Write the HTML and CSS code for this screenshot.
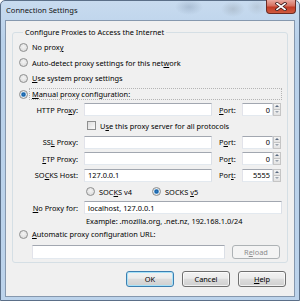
FILE: index.html
```html
<!DOCTYPE html>
<html>
<head>
<meta charset="utf-8">
<link rel="stylesheet" href="styles.css">
</head>
<body>
<div class="window">
  <div class="titlebar">
    <span class="title">Connection Settings</span>
    <div class="close">
      <svg width="12" height="9" viewBox="0 0 12 9"><path d="M2 1.5 L10 7.5 M10 1.5 L2 7.5" stroke="#3b1a1a" stroke-width="3.2" stroke-linecap="square"/><path d="M2 1.5 L10 7.5 M10 1.5 L2 7.5" stroke="#fff" stroke-width="1.6" stroke-linecap="square"/></svg>
    </div>
  </div>
  <div class="client">
    <fieldset class="group">
      <legend>Configure Proxies to Access the Internet</legend>
      <div class="row r1"><span class="radio"></span><span>No prox<u>y</u></span></div>
      <div class="row r2"><span class="radio"></span><span>Auto-detect proxy settings for this net<u>w</u>ork</span></div>
      <div class="row r3"><span class="radio"></span><span><u>U</u>se system proxy settings</span></div>
      <div class="row r4"><span class="radio on"></span><span class="focus"><u>M</u>anual proxy configuration:</span></div>
      <div class="row r5">
        <span class="lbl">HTTP Pro<u>x</u>y:</span><span class="input host"></span>
        <span class="plbl"><u>P</u>ort:</span><span class="input port">0</span><span class="spin"><i class="up"></i><i class="dn"></i></span>
      </div>
      <div class="row r6"><span class="check"></span><span>U<u>s</u>e this proxy server for all protocols</span></div>
      <div class="row r7">
        <span class="lbl">SS<u>L</u> Proxy:</span><span class="input host"></span>
        <span class="plbl">P<u>o</u>rt:</span><span class="input port">0</span><span class="spin"><i class="up"></i><i class="dn"></i></span>
      </div>
      <div class="row r8">
        <span class="lbl"><u>F</u>TP Proxy:</span><span class="input host"></span>
        <span class="plbl">Po<u>r</u>t:</span><span class="input port">0</span><span class="spin"><i class="up"></i><i class="dn"></i></span>
      </div>
      <div class="row r9">
        <span class="lbl">SO<u>C</u>KS Host:</span><span class="input host">127.0.0.1</span>
        <span class="plbl">Por<u>t</u>:</span><span class="input port">5555</span><span class="spin"><i class="up"></i><i class="dn"></i></span>
      </div>
      <div class="row r10">
        <span class="radio"></span><span class="v4">SOC<u>K</u>S v4</span>
        <span class="radio on"></span><span>SOCKS <u>v</u>5</span>
      </div>
      <div class="row r11">
        <span class="lbl"><u>N</u>o Proxy for:</span><span class="input noproxy">localhost, 127.0.0.1</span>
      </div>
      <div class="row r12"><span class="example">Example: .mozilla.org, .net.nz, 192.168.1.0/24</span></div>
      <div class="row r13"><span class="radio"></span><span><u>A</u>utomatic proxy configuration URL:</span></div>
      <div class="row r14"><span class="input url"></span><span class="btn disabled">R<u>e</u>load</span></div>
    </fieldset>
    <div class="buttons">
      <span class="btn default">OK</span>
      <span class="btn">Cancel</span>
      <span class="btn"><u>H</u>elp</span>
    </div>
  </div>
</div>
</body>
</html>
```

FILE: styles.css
```css
* { box-sizing: border-box; margin: 0; padding: 0; }
html, body { margin: 0; width: 300px; height: 301px; overflow: hidden; background: #fff; }
body { font-family: "Noto Sans", "Open Sans", sans-serif; font-size: 7.4px; color: #000; }
u { text-decoration: underline; text-underline-offset: 1px; }

.window {
  width: 300px; height: 301px;
  display: flex; flex-direction: column;
  padding: 0 4px 3px 4px;
  border: 1px solid #5b6f88;
  border-radius: 5px 5px 0 0;
  background:
    radial-gradient(ellipse 14px 8px at 188px 6px, rgba(120,140,165,0.35), transparent),
    radial-gradient(ellipse 12px 8px at 232px 8px, rgba(140,150,160,0.35), transparent),
    radial-gradient(ellipse 10px 8px at 256px 6px, rgba(150,160,170,0.3), transparent),
    linear-gradient(#c8dbef, #b9d1ea 40px, #bcd3eb);
}
.titlebar { height: 19px; display: flex; align-items: flex-start; }
.title { margin-top: 4px; padding-left: 1px; font-size: 7.6px; color: #111; }
.close {
  margin-left: auto; margin-top: -1px; margin-right: -1px;
  width: 30px; height: 14px;
  border: 1px solid #6b2b23; border-top: none;
  border-radius: 0 0 4px 4px;
  background: linear-gradient(#e9a99f, #d6705f 45%, #c13b25 55%, #cf5a3f);
  display: flex; align-items: center; justify-content: center;
}
.client {
  flex: 1;
  background: #f0f0f0;
  border: 1px solid #8698ae;
  padding: 6px 6px 0 6px;
  display: flex; flex-direction: column;
}
.group {
  border: 1px solid #d5dfe5;
  border-radius: 3px;
  padding: 2px 3px 3px 6px;
  width: 276px;
}
.group legend { line-height: 10px; height: 10px; padding: 0 2px; margin-left: 4px; }

.row { display: flex; align-items: center; white-space: nowrap; }
.r1 { height: 16px; } .r2 { height: 15px; } .r3 { height: 16px; } .r4 { height: 16px; }
.r5 { height: 15px; } .r6 { height: 17px; } .r7 { height: 16px; } .r8 { height: 17px; }
.r9 { height: 16px; } .r10 { height: 17px; } .r11 { height: 15px; } .r12 { height: 12px; }
.r13 { height: 14px; } .r14 { padding-top: 4px; height: 18px; align-items: flex-start; }

.radio {
  width: 9px; height: 9px; border-radius: 50%; flex: none;
  border: 1px solid #8e8f8f;
  background: radial-gradient(circle at 50% 40%, #f4f4f4, #d6d6d6);
  margin-right: 4px;
}
.radio.on {
  background: radial-gradient(circle, #2a7fc8 0, #1b5e9e 1.6px, #82b7e3 2.3px, #eaeaea 3px, #d6d6d6 4px);
}
.r4 .radio { margin-right: 1px; }
.focus {
  flex: 1; margin-right: 2px; height: 12px; line-height: 10px;
  border: 1px dotted #b4b4b4; padding: 0 2px;
}
.check {
  width: 9px; height: 9px; flex: none; margin-left: 68px; margin-right: 4px;
  border: 1px solid #8e8f8f;
  background: linear-gradient(135deg, #dcdcdc, #fafafa);
}
.lbl { width: 60px; text-align: right; flex: none; margin-right: 5px; padding-right: 1px; }
.input {
  height: 13px; background: #fff; border: 1px solid #abadb3;
  border-top-color: #a2a7b0; border-left-color: #e2e3ea; border-right-color: #dbdfe6; border-bottom-color: #e3e9ef;
  display: flex; align-items: center; padding: 0 3px; flex: none;
}
.host { width: 128px; }
.plbl { width: 23px; margin-left: 7px; flex: none; }
.port { width: 31px; justify-content: flex-end; padding-right: 2px; }
.spin { width: 8px; height: 13px; display: flex; flex-direction: column; flex: none; }
.spin i {
  flex: 1; display: block; position: relative;
  background: linear-gradient(#f3f3f3, #e2e2e2);
  border: 1px solid #c5c5c5;
}
.spin i.dn { border-top: none; }
.spin i::after {
  content: ""; position: absolute; left: 1px; top: 1px;
  border-left: 2px solid transparent; border-right: 2px solid transparent;
}
.spin i.up::after { border-bottom: 2px solid #5a6a80; top: 1px; }
.spin i.dn::after { border-top: 2px solid #9aa3ae; top: 1px; }

.r10 .radio:first-child { margin-left: 67px; }
.v4 { margin-right: 20px; }
.noproxy { width: 198px; }
.example { margin-left: 67px; }
.url { width: 193px; height: 14px; margin-left: 13px; }

.btn {
  display: flex; align-items: center; justify-content: center;
  width: 48px; height: 16px; flex: none;
  border: 1px solid #707070; border-radius: 3px;
  background: linear-gradient(#f2f2f2, #ebebeb 45%, #dddddd 50%, #cfcfcf);
  box-shadow: inset 0 0 0 1px rgba(255,255,255,0.7);
}
.r14 .btn { height: 14px; margin-left: 7px; }
.btn.disabled { color: #8d8d8d; border-color: #adb2b5; background: #f4f4f4; box-shadow: none; }
.btn.default { border-color: #3c7fb1; box-shadow: inset 0 0 0 1px #a8e2f8; }
.buttons { display: flex; gap: 8px; justify-content: flex-end; margin-top: 8px; padding-right: 2px; }
```
